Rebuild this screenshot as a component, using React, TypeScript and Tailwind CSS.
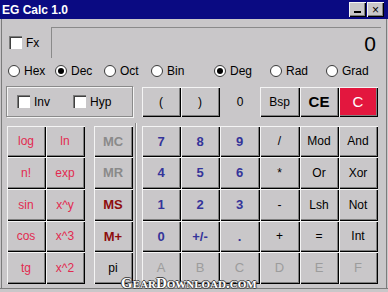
import React from "react";

const FONT = { fontFamily: '"Liberation Sans", Arial, sans-serif' };

const RAISED =
  "shadow-[inset_1px_1px_0_#f4f4f4,inset_-1px_-1px_0_#000000,inset_-2px_-2px_0_#7e7e7e]";

function Btn({
  label,
  cls = "text-black text-[12px]",
  bg = "bg-[#c9c7c9]",
}: {
  label: string;
  cls?: string;
  bg?: string;
}) {
  return (
    <div className={`flex items-center justify-center ${bg} ${RAISED} ${cls}`}>
      <span className="leading-none pb-[1px] pr-[1px]">{label}</span>
    </div>
  );
}

function Check({ label }: { label: string }) {
  return (
    <div className="flex items-center">
      <div className="w-[13px] h-[13px] bg-white border-t border-l border-[#7a7a7a] border-r-white border-b-white shadow-[inset_1px_1px_0_#404040]" />
      <span className="ml-[4px] text-[12px] text-black leading-none">{label}</span>
    </div>
  );
}

function Radio({ label, on, w }: { label: string; on?: boolean; w: string }) {
  return (
    <div className={`flex items-center ${w}`}>
      <div className="w-[12px] h-[12px] rounded-full bg-white border border-[#3a3a3a] flex items-center justify-center shrink-0">
        {on && <div className="w-[6px] h-[6px] rounded-full bg-black" />}
      </div>
      <span className="ml-[4px] text-[12px] text-black leading-none">{label}</span>
    </div>
  );
}

export default function App() {
  const fn = "text-[#e22a50] text-[12px]";
  const dig = "text-[#34349a] text-[13px] font-bold";
  const hex = "text-[#9c9c9c] text-[13px]";
  const op = "text-black text-[12px]";
  return (
    <div
      className="relative w-[388px] h-[292px] bg-[#c9c7c9] flex flex-col overflow-hidden"
      style={FONT}
    >
      {/* Title bar */}
      <div className="h-[19px] bg-[#0a0a82] flex items-center justify-between pl-[2px] pr-[4px]">
        <span className="text-white font-bold text-[12px] leading-none">EG Calc 1.0</span>
        <div className="flex gap-[1px]">
          <div className={`w-[17px] h-[15px] bg-[#c9c7c9] ${RAISED} flex items-end justify-center`}>
            <div className="w-[7px] h-[2px] bg-black mb-[4px]" />
          </div>
          <div className={`w-[17px] h-[15px] bg-[#c9c7c9] ${RAISED} flex items-center justify-center text-[12px] text-black leading-none`}>
            ×
          </div>
        </div>
      </div>

      {/* Body */}
      <div className="flex-1 flex flex-col shadow-[inset_0_-3px_0_#c9c7c9,inset_0_-4px_0_#7c7c7c,inset_1px_0_0_#c9c7c9,inset_2px_0_0_#7c7c7c,inset_-1px_0_0_#c9c7c9,inset_-2px_0_0_#7c7c7c]">
        {/* Row A */}
        <div className="mt-[8px] h-[31px] flex items-center">
          <div className="w-[51px] pl-[9px] flex items-center">
            <Check label="Fx" />
          </div>
          <div className="w-[330px] h-[31px] border-t border-l border-[#8a8a8a] border-r-white border-b-white flex items-center justify-end pr-[5px]">
            <span className="text-[21px] text-black leading-none">0</span>
          </div>
        </div>

        {/* Row B radios */}
        <div className="mt-[6px] h-[14px] flex items-center pl-[8px]">
          <Radio label="Hex" w="w-[47px]" />
          <Radio label="Dec" on w="w-[49px]" />
          <Radio label="Oct" w="w-[47px]" />
          <Radio label="Bin" w="w-[63px]" />
          <Radio label="Deg" on w="w-[56px]" />
          <Radio label="Rad" w="w-[56px]" />
          <Radio label="Grad" w="w-[50px]" />
        </div>

        {/* Row C */}
        <div className="mt-[9px] h-[30px] flex">
          <div className="ml-[6px] w-[127px] h-[31px] -mt-[1px] border border-[#8a8a8a] shadow-[inset_1px_1px_0_#f4f4f4,1px_1px_0_#f4f4f4] flex items-center pl-[10px]">
            <div className="w-[56px]">
              <Check label="Inv" />
            </div>
            <Check label="Hyp" />
          </div>
          <div className="ml-[9px] grid grid-cols-[39px_39px_40px_40px_39px_39px] h-[30px]">
            <Btn label="(" />
            <Btn label=")" />
            <div className="flex items-center justify-center text-[12px] text-black">0</div>
            <Btn label="Bsp" />
            <Btn label="CE" cls="text-black text-[15px] font-bold" />
            <Btn label="C" cls="text-white text-[15px]" bg="bg-[#e3173e]" />
          </div>
        </div>

        {/* Row D */}
        <div className="mt-[9px] flex">
          <div className="ml-[7px] grid grid-cols-[39px_39px] grid-rows-[31px_32px_32px_31px_32px]">
            <Btn label="log" cls={fn} />
            <Btn label="ln" cls={fn} />
            <Btn label="n!" cls={fn} />
            <Btn label="exp" cls={fn} />
            <Btn label="sin" cls={fn} />
            <Btn label="x^y" cls={fn} />
            <Btn label="cos" cls={fn} />
            <Btn label="x^3" cls={fn} />
            <Btn label="tg" cls={fn} />
            <Btn label="x^2" cls={fn} />
          </div>
          <div className="ml-[9px] grid grid-cols-[39px] grid-rows-[31px_32px_32px_31px_32px]">
            <Btn label="MC" cls="text-[#8a8a8a] text-[13px] font-bold" />
            <Btn label="MR" cls="text-[#8a8a8a] text-[13px] font-bold" />
            <Btn label="MS" cls="text-[#8e0d0d] text-[13px] font-bold" />
            <Btn label="M+" cls="text-[#8e0d0d] text-[13px] font-bold" />
            <Btn label="pi" cls="text-black text-[12px]" />
          </div>
          <div className="ml-[2px] -mt-[3px] w-[2px] h-[162px] border-l border-[#8a8a8a] border-r border-r-[#f4f4f4]" />
          <div className="ml-[5px] grid grid-cols-[39px_39px_40px_40px_39px_39px] grid-rows-[31px_32px_32px_31px_32px]">
            <Btn label="7" cls={dig} />
            <Btn label="8" cls={dig} />
            <Btn label="9" cls={dig} />
            <Btn label="/" cls={op} />
            <Btn label="Mod" cls={op} />
            <Btn label="And" cls={op} />
            <Btn label="4" cls={dig} />
            <Btn label="5" cls={dig} />
            <Btn label="6" cls={dig} />
            <Btn label="*" cls={op} />
            <Btn label="Or" cls={op} />
            <Btn label="Xor" cls={op} />
            <Btn label="1" cls={dig} />
            <Btn label="2" cls={dig} />
            <Btn label="3" cls={dig} />
            <Btn label="-" cls={op} />
            <Btn label="Lsh" cls={op} />
            <Btn label="Not" cls={op} />
            <Btn label="0" cls={dig} />
            <Btn label="+/-" cls={dig} />
            <Btn label="." cls={dig} />
            <Btn label="+" cls={op} />
            <Btn label="=" cls={op} />
            <Btn label="Int" cls={op} />
            <Btn label="A" cls={hex} />
            <Btn label="B" cls={hex} />
            <Btn label="C" cls={hex} />
            <Btn label="D" cls={hex} />
            <Btn label="E" cls={hex} />
            <Btn label="F" cls={hex} />
          </div>
        </div>
      </div>

      {/* Watermark */}
      <div
        className="absolute left-[121px] top-[276px] text-white text-[15px] font-bold leading-none [font-variant:small-caps] [text-shadow:1px_0_0_#444,-1px_0_0_#444,0_1px_0_#444,0_-1px_0_#444]"
        style={{ fontFamily: '"Liberation Serif", "Times New Roman", serif' }}
      >
        GearDownload.com
      </div>
    </div>
  );
}
